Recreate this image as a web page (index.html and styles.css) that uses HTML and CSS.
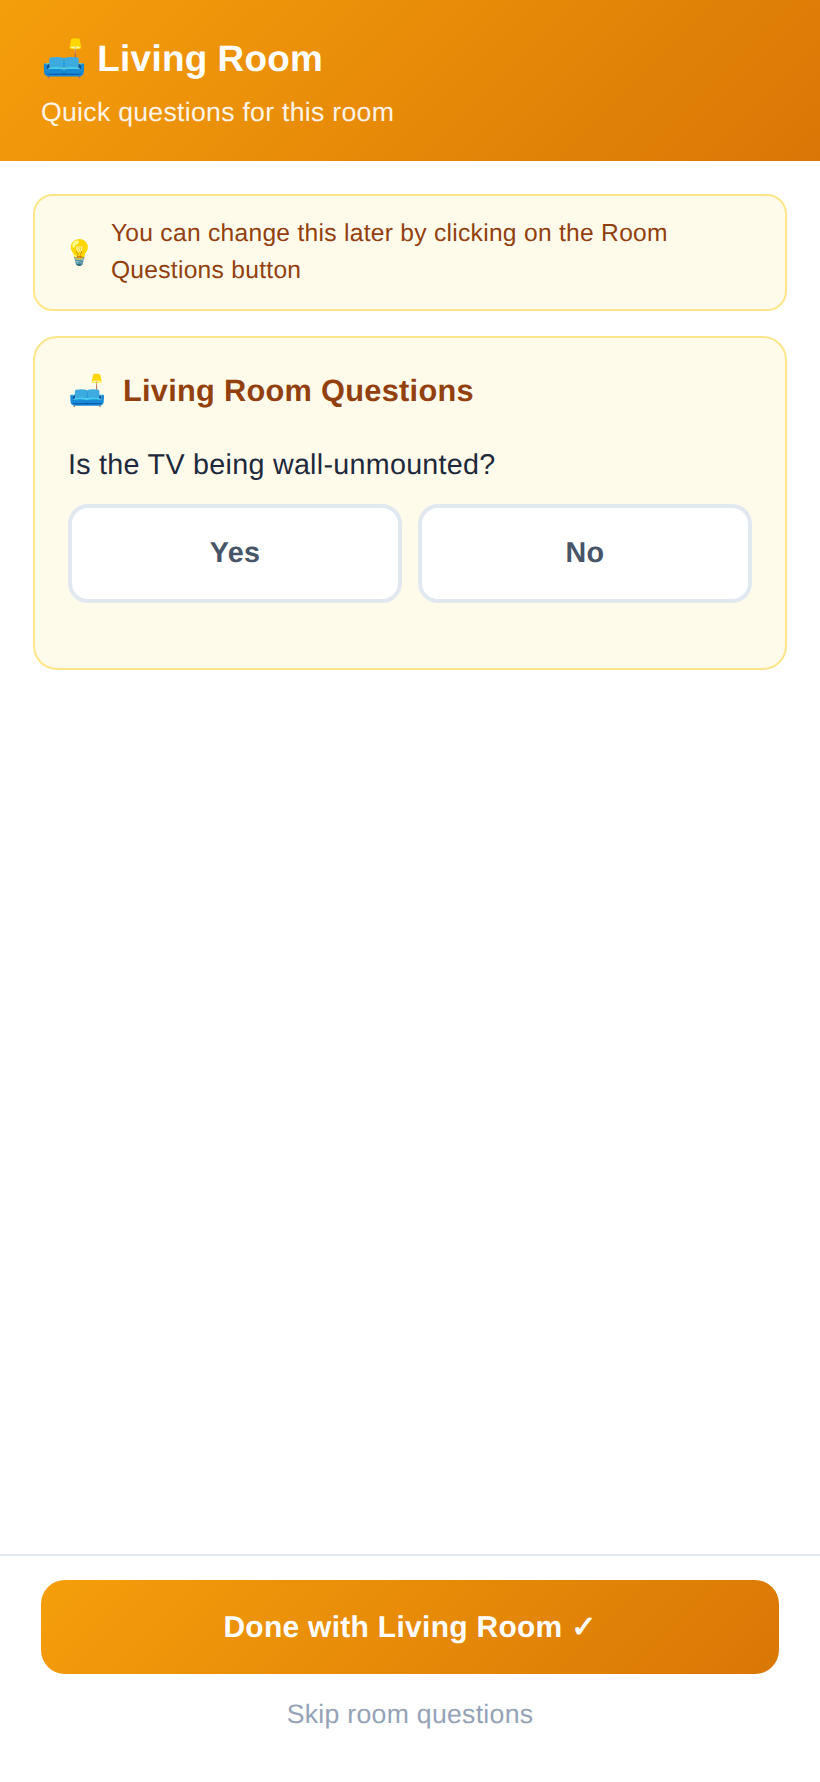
FILE: index.html
```html
<!DOCTYPE html>
<html lang="en">
<head>
    <meta charset="UTF-8">
    <meta name="viewport" content="width=device-width, initial-scale=1.0">
    <title>Living Room</title>
    <link rel="stylesheet" href="styles.css">
</head>
<body>
    <div class="page">
        <header class="room-header">
            <h1 class="room-title">🛋️ Living Room</h1>
            <p class="room-subtitle">Quick questions for this room</p>
        </header>

        <main class="content">
            <div class="hint">
                <span class="hint-icon">💡</span>
                <p class="hint-text">You can change this later by clicking on the Room Questions button</p>
            </div>

            <section class="card">
                <h2 class="card-title"><span>🛋️</span>Living Room Questions</h2>
                <p class="question">Is the TV being wall-unmounted?</p>
                <div class="answers">
                    <button class="answer" type="button">Yes</button>
                    <button class="answer" type="button">No</button>
                </div>
            </section>
        </main>

        <footer class="room-footer">
            <button class="done" type="button">Done with Living Room ✓</button>
            <button class="skip" type="button">Skip room questions</button>
        </footer>
    </div>
</body>
</html>
```

FILE: styles.css
```css
* {
    box-sizing: border-box;
}

body {
    font-family: 'Liberation Sans', Arial, sans-serif;
    letter-spacing: 0.28px;
    text-rendering: geometricPrecision;
    margin: 0;
    padding: 0;
    background-color: #ffffff;
}

button {
    font-family: inherit;
    letter-spacing: inherit;
    text-rendering: inherit;
}

.page {
    display: flex;
    flex-direction: column;
    height: 1782px;
}

.room-header {
    height: 161px;
    padding: 33px 41px 0;
    background: linear-gradient(135deg, #f59e0b, #d97706);
    color: #ffffff;
}

.room-title {
    margin: 0 0 9px;
    font-size: 36.9px;
    line-height: 52px;
    font-weight: 700;
    word-spacing: -0.5px;
}

.room-subtitle {
    margin: 0;
    font-size: 26.65px;
    line-height: 36px;
    opacity: 0.9;
}

.content {
    flex: 1;
    padding: 33px 33px 0;
}

.hint {
    display: flex;
    align-items: center;
    gap: 16px;
    height: 117px;
    padding: 1px 29px 0;
    margin-bottom: 25px;
    background-color: #fffbeb;
    border: 2px solid #fde68a;
    border-radius: 20px;
}

.hint-icon {
    font-size: 24.6px;
}

.hint-text {
    margin: 0;
    font-size: 24.6px;
    line-height: 36.9px;
    color: #92400e;
}

.card {
    height: 334px;
    padding: 32px 33px;
    background-color: #fffbeb;
    border: 2px solid #fde68a;
    border-radius: 24px;
}

.card-title {
    display: flex;
    align-items: center;
    gap: 16.4px;
    margin: 0 0 32px;
    font-size: 30.75px;
    line-height: 42px;
    color: #92400e;
}

.question {
    margin: 0 0 18px;
    font-size: 28.7px;
    line-height: 42px;
    color: #1e293b;
}

.answers {
    display: grid;
    grid-template-columns: 1fr 1fr;
    gap: 16px;
}

.answer {
    height: 99px;
    font-size: 28.7px;
    font-weight: 700;
    color: #475569;
    background-color: #ffffff;
    border: 4px solid #e2e8f0;
    border-radius: 20px;
}

.room-footer {
    height: 228px;
    padding: 24px 41px 0;
    border-top: 2px solid #e2e8f0;
}

.done {
    display: block;
    width: 100%;
    height: 94px;
    font-size: 30px;
    font-weight: 700;
    color: #ffffff;
    background: linear-gradient(135deg, #f59e0b, #d97706);
    border: none;
    border-radius: 24px;
}

.skip {
    display: block;
    width: 100%;
    margin-top: 20px;
    padding: 0;
    height: 40px;
    font-size: 26.65px;
    color: #94a3b8;
    background: none;
    border: none;
}
```
